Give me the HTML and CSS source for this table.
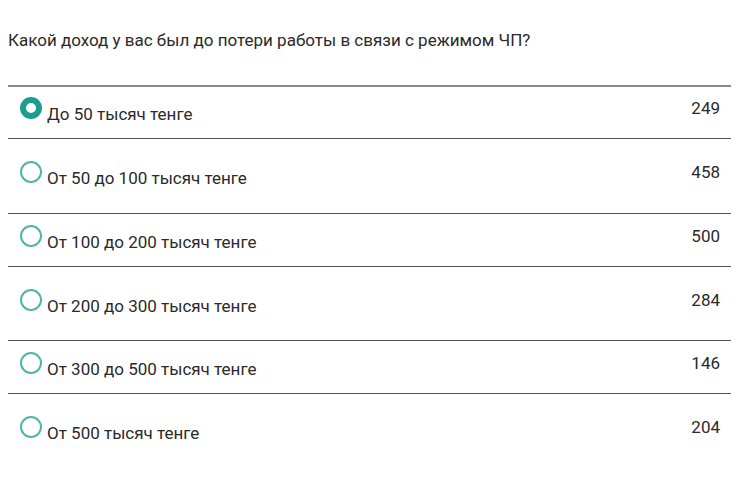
FILE: index.html
```html
<!DOCTYPE html>
<html>
<head>
<meta charset="utf-8">
<link rel="stylesheet" href="styles.css">
</head>
<body>
<div class="poll">
  <div class="question">Какой доход у вас был до потери работы в связи с режимом ЧП?</div>
  <div class="options">
    <div class="option short first">
      <span class="radio checked"></span>
      <span class="label">До 50 тысяч тенге</span>
      <span class="count">249</span>
    </div>
    <div class="option tall second">
      <span class="radio"></span>
      <span class="label">От 50 до 100 тысяч тенге</span>
      <span class="count">458</span>
    </div>
    <div class="option short">
      <span class="radio"></span>
      <span class="label">От 100 до 200 тысяч тенге</span>
      <span class="count">500</span>
    </div>
    <div class="option tall">
      <span class="radio"></span>
      <span class="label">От 200 до 300 тысяч тенге</span>
      <span class="count">284</span>
    </div>
    <div class="option short">
      <span class="radio"></span>
      <span class="label">От 300 до 500 тысяч тенге</span>
      <span class="count">146</span>
    </div>
    <div class="option tall last">
      <span class="radio"></span>
      <span class="label">От 500 тысяч тенге</span>
      <span class="count">204</span>
    </div>
  </div>
</div>
</body>
</html>
```
FILE: styles.css
```css
html, body {
  margin: 0;
  padding: 0;
  background: #fff;
}
body {
  font-family: Roboto, "Liberation Sans", sans-serif;
  color: #2a2a2a;
}
.poll {
  width: 723px;
  padding: 0 0 0 8px;
}
.question {
  font-size: 17px;
  line-height: 20px;
  padding-top: 30px;
}
.options {
  margin-top: 35px;
}
.option {
  display: flex;
  align-items: flex-start;
  box-sizing: border-box;
  border-top: 1px solid #555;
  padding-left: 12px;
  padding-right: 11px;
  font-size: 17px;
  line-height: 20px;
}
.option.first {
  border-top: 2px solid #8a8a8a;
}
.option.short {
  height: 53px;
  padding-top: 11px;
}
.option.first {
  padding-top: 10px;
}
.option.tall {
  height: 74px;
  padding-top: 22px;
}
.option.second {
  height: 75px;
}
.radio {
  flex: none;
  width: 22px;
  height: 22px;
  box-sizing: border-box;
  border-radius: 50%;
  border: 2px solid #52b5aa;
  margin-right: 5px;
}
.radio.checked {
  border: 6px solid #1b9e90;
}
.label {
  flex: 1;
  padding-top: 7px;
}
.count {
  flex: none;
  padding-top: 1px;
}
```
